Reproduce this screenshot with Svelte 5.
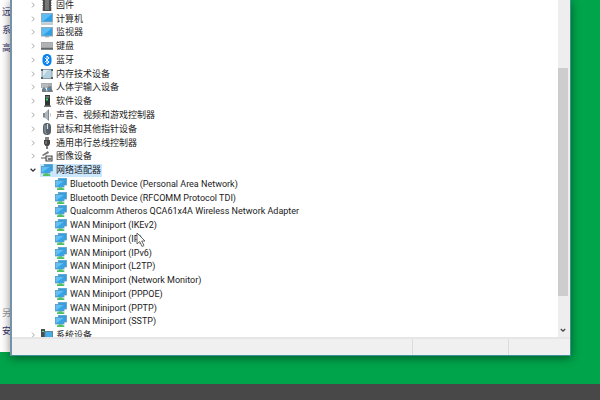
<script>
  const categories = [
    { name: '固件', icon: 'chip' },
    { name: '计算机', icon: 'computer' },
    { name: '监视器', icon: 'monitor' },
    { name: '键盘', icon: 'keyboard' },
    { name: '蓝牙', icon: 'bluetooth' },
    { name: '内存技术设备', icon: 'memory' },
    { name: '人体学输入设备', icon: 'hid' },
    { name: '软件设备', icon: 'software' },
    { name: '声音、视频和游戏控制器', icon: 'sound' },
    { name: '鼠标和其他指针设备', icon: 'mouse' },
    { name: '通用串行总线控制器', icon: 'usb' },
    { name: '图像设备', icon: 'imaging' },
    { name: '网络适配器', icon: 'network', open: true },
    { name: 'Bluetooth Device (Personal Area Network)', icon: 'network', child: true },
    { name: 'Bluetooth Device (RFCOMM Protocol TDI)', icon: 'network', child: true },
    { name: 'Qualcomm Atheros QCA61x4A Wireless Network Adapter', icon: 'network', child: true },
    { name: 'WAN Miniport (IKEv2)', icon: 'network', child: true },
    { name: 'WAN Miniport (IP)', icon: 'network', child: true },
    { name: 'WAN Miniport (IPv6)', icon: 'network', child: true },
    { name: 'WAN Miniport (L2TP)', icon: 'network', child: true },
    { name: 'WAN Miniport (Network Monitor)', icon: 'network', child: true },
    { name: 'WAN Miniport (PPPOE)', icon: 'network', child: true },
    { name: 'WAN Miniport (PPTP)', icon: 'network', child: true },
    { name: 'WAN Miniport (SSTP)', icon: 'network', child: true },
    { name: '系统设备', icon: 'system' }
  ];
  let selected = $state('网络适配器');
</script>

<div class="desktop">
  <div class="workspace">
    <nav class="behind">
      <div class="links">
        <a href="#remote">远</a>
        <a href="#protect">系</a>
        <a href="#advanced">高</a>
      </div>
      <div class="links">
        <span>另</span>
        <a href="#security">安</a>
      </div>
    </nav>

    <main class="window">
      <div class="body">
        <div class="view">
          <ul class="tree">
            {#each categories as item (item.name)}
              <li class:child={item.child}>
                {#if !item.child}
                  <svg class="arrow" viewBox="0 0 6 6" aria-hidden="true">
                    {#if item.open}
                      <path d="M.6 1.8 3 4.2 5.4 1.8" fill="none" stroke="#333" stroke-width="1.3" />
                    {:else}
                      <path d="M2 .6 4.3 3 2 5.4" fill="none" stroke="#a8a8a8" stroke-width="1" />
                    {/if}
                  </svg>
                {/if}
                <button class:selected={selected === item.name} onclick={() => (selected = item.name)}>
                  <svg class="icon" viewBox="0 0 12 12" aria-hidden="true">
                    {#if item.icon === 'chip'}
                      <path d="M1 1.5h10M1 4h10M1 6.500h10M1 9h10M1 11h10" stroke="#999" />
                      <rect x="2" y="0" width="8" height="12" fill="#4b4b4b" />
                      <rect x="4" y="1" width="4" height="10" fill="#777" />
                    {:else if item.icon === 'computer'}
                      <rect x="0.500" y="0.500" width="11" height="8.500" fill="#2f9fe6" stroke="#8fa9b8" />
                      <path d="M1 1h10L2 8.500H1z" fill="#5cbcf3" />
                      <path d="M0 11h12" stroke="#a9b8c2" stroke-width="1.400" />
                    {:else if item.icon === 'monitor'}
                      <rect x="0.500" y="1.500" width="11" height="8.500" fill="#2f9fe6" stroke="#8fa9b8" />
                      <path d="M1 2h10L2 9.500H1z" fill="#5cbcf3" />
                      <path d="M4 10.800h4" stroke="#8d9ca5" />
                    {:else if item.icon === 'keyboard'}
                      <rect x="0" y="2" width="12" height="8" fill="#a5a8aa" />
                      <path d="M1 4h10M1 6h10" stroke="#c4c6c8" stroke-dasharray="1.300 .5" />
                      <path d="M0 8.700h12" stroke="#626669" stroke-width="1.600" />
                    {:else if item.icon === 'bluetooth'}
                      <rect x="1.500" y="0" width="9" height="12" rx="4.500" fill="#0782ef" />
                      <path d="m3.800 3.700 4.300 4.300L6 10V2l2.100 2-4.300 4.300" fill="none" stroke="#fff" stroke-width="1" />
                    {:else if item.icon === 'memory'}
                      <rect x="1" y="1.500" width="10" height="9" fill="#b4d1df" stroke="#8c9da6" />
                      <path d="M2 2h5L2 8z" fill="#dceaf0" />
                      <path d="M0 1h2v2H0zM10 1h2v2h-2zM0 9h2v2H0zM10 9h2v2h-2z" fill="#53646d" />
                    {:else if item.icon === 'hid'}
                      <path d="M0 2h11v5H0z" fill="#a6acb0" />
                      <path d="M1 4h6M1 6h5" stroke="#ddd" stroke-dasharray="1 .6" />
                      <path d="M1 11V8l2-2 2 2 1 3M6 11l1-5 3-1 2 6z" fill="#737c83" />
                      <path d="M6 7h2v2H6z" fill="#339bdc" />
                    {:else if item.icon === 'software'}
                      <path d="M4 0h5v11H4z" fill="#303634" />
                      <path d="M4.600 1h3.600v2H4.600z" fill="#65736d" />
                      <path d="M5 3.500h2v2H5z" fill="#46cf68" />
                      <path d="M3 10.500h7V12H3z" fill="#727775" />
                    {:else if item.icon === 'sound'}
                      <path d="M2 4h2l4-4v12L4 8.500H2z" fill="#7e878d" />
                      <path d="M4 4 7 1v10L4 8z" fill="#b1b8bc" />
                      <path d="M9 4q1.500 2 0 4" fill="none" stroke="#ccc" />
                    {:else if item.icon === 'mouse'}
                      <rect x="2" y="0" width="8" height="12" rx="3.800" fill="#586169" />
                      <path d="M4 2v6q0 2 2 3" fill="none" stroke="#9ba6ae" />
                      <path d="M6.500 1v5" stroke="#d5e3ec" stroke-width="1.200" />
                    {:else if item.icon === 'usb'}
                      <path d="M4 0h4v3H4z" fill="#858585" />
                      <path d="M3 3h6v4L7.500 9h-3L3 7z" fill="#444" />
                      <path d="M6 8v4" stroke="#555" stroke-width="1.500" />
                      <path d="M5 4v3" stroke="#999" />
                    {:else if item.icon === 'imaging'}
                      <path d="m1 5 6-4 1 2-6 3z" fill="#777" />
                      <path d="M0 8h5M5 6h6v5H5z" fill="#ddd" stroke="#505050" stroke-width="1.200" />
                      <path d="M7 8h3v2H7z" fill="#777" />
                    {:else if item.icon === 'network'}
                      <rect x="3.300" y="0.500" width="8.200" height="6.500" fill="#2f9fe6" stroke="#5f9fc6" stroke-width=".8" />
                      <rect x="0.500" y="2.500" width="8.500" height="6.500" fill="#35a5ea" stroke="#5a9ac2" stroke-width=".8" />
                      <path d="M1 3h7.500L1 8.500z" fill="#62c0f5" />
                      <path d="M3.500 9.300h3.800v1h2V12H2v-1.700h1.500z" fill="#4fc063" />
                    {:else}
                      <path d="M0 0h4v10H0z" fill="#454e50" />
                      <path d="M1 2h2v1H1z" fill="#5ddb79" />
                      <rect x="4" y="2.500" width="7.500" height="6.500" fill="#43afe9" stroke="#66869a" />
                    {/if}
                  </svg>
                  <span>{item.name}</span>
                </button>
              </li>
            {/each}
          </ul>
        </div>
        <div class="scroll">
          <div class="thumb"></div>
          <button class="down" aria-label="向下滚动">
            <svg viewBox="0 0 6 6"><path d="M.8 2 3 4.200 5.200 2" fill="none" stroke="#444" stroke-width="1.300" /></svg>
          </button>
        </div>
      </div>
      <footer class="status"><div></div><div></div><div></div></footer>
      <svg class="pointer" viewBox="0 0 10 16" aria-hidden="true">
        <path d="M1 1v11l2.700-2.500L6 14.500l2-1-2.300-4.500H9z" fill="#fff" stroke="#666" stroke-width="1" />
      </svg>
    </main>
  </div>
  <div class="taskbar"></div>
</div>

<style>
  :global(body) { margin: 0; }
  .desktop {
    display: flex;
    flex-direction: column;
    height: 100vh;
    overflow: hidden;
    background: #00a44a;
    color: #222;
    font-family: Roboto, "Noto Sans CJK SC", sans-serif;
    font-size: 9px;
    line-height: 12px;
  }
  .workspace { display: flex; flex: 1; min-height: 0; }
  .taskbar { z-index: 1; height: 16px; background: #484848; }
  .behind {
    box-sizing: border-box;
    display: flex;
    flex-direction: column;
    justify-content: space-between;
    width: 10px;
    margin-bottom: 32px;
    padding: 3px 0 12px 2px;
    background: #fff;
    overflow: hidden;
  }
  .links { display: flex; flex-direction: column; line-height: 18px; }
  .links a { color: #35356e; text-decoration: none; }
  .links span { color: #999; }
  .window {
    position: relative;
    display: flex;
    flex: 1;
    flex-direction: column;
    min-width: 0;
    margin: 0 29px 28px 0;
    border: solid #3c9298;
    border-width: 0 1px 1px 2px;
    border-left-color: #7592a8;
    box-sizing: border-box;
    background: #f0f0f0;
    box-shadow: 0 2px 9px rgba(0, 0, 0, 0.45);
  }
  .body { display: flex; flex: 1; min-height: 0; }
  .view { display: flex; flex: 1; min-width: 0; overflow: hidden; background: #fff; }
  .tree {
    display: flex;
    flex: 1;
    flex-direction: column;
    margin: -2px 0 -5px;
    padding: 0 0 0 18px;
    list-style: none;
  }
  li { display: flex; flex: 1; align-items: center; min-height: 0; }
  .arrow { width: 6px; height: 6px; margin-right: 4px; }
  .child { padding-left: 24px; }
  li button {
    display: flex;
    align-items: center;
    gap: 3px;
    height: 13px;
    padding: 0 1px;
    border: 0;
    background: none;
    color: inherit;
    font: inherit;
    white-space: nowrap;
  }
  li button.selected { background: #cce8ff; }
  .icon { width: 12px; height: 12px; }
  .scroll {
    display: flex;
    flex-direction: column;
    width: 10px;
    padding-right: 2px;
    background: #eee;
  }
  .thumb { flex: 1; margin-top: 68px; background: #cdcdcd; }
  .down {
    display: flex;
    align-items: flex-end;
    justify-content: center;
    height: 41px;
    padding: 0 0 4px;
    border: 0;
    background: none;
  }
  .down svg { width: 6px; height: 6px; }
  .status {
    display: flex;
    height: 16px;
    border-top: 2px solid #e6e6e6;
  }
  .status div { flex: 0 0 61px; border-left: 1px solid #dcdcdc; }
  .status div:first-child { flex: 1; border: 0; }
  .status div:nth-child(2) { flex-basis: 95px; }
  .pointer { position: absolute; left: 124px; top: 232px; width: 10px; height: 16px; }
</style>
